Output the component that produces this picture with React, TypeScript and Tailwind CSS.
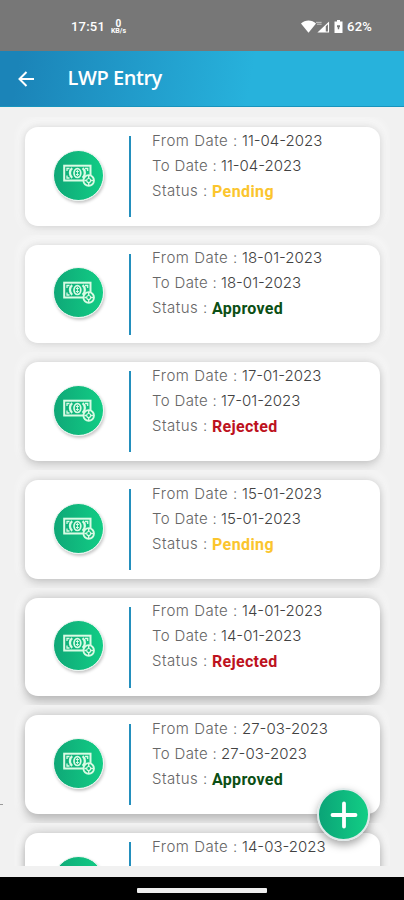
import { clsx } from 'clsx';

type Status = 'Pending' | 'Approved' | 'Rejected';

interface LeaveEntry {
  from: string;
  to: string;
  status: Status;
}

const ENTRIES: LeaveEntry[] = [
  { from: '11-04-2023', to: '11-04-2023', status: 'Pending' },
  { from: '18-01-2023', to: '18-01-2023', status: 'Approved' },
  { from: '17-01-2023', to: '17-01-2023', status: 'Rejected' },
  { from: '15-01-2023', to: '15-01-2023', status: 'Pending' },
  { from: '14-01-2023', to: '14-01-2023', status: 'Rejected' },
  { from: '27-03-2023', to: '27-03-2023', status: 'Approved' },
  { from: '14-03-2023', to: '14-03-2023', status: 'Approved' },
];

const STATUS_STYLES: Record<Status, string> = {
  Pending: 'text-[#fbc52d] tracking-[0.4px]',
  Approved: 'text-[#0b4f14] tracking-[0.3px]',
  Rejected: 'text-[#bd1220] tracking-[0.3px]',
};

// Elevation gets heavier further down the list
const CARD_SHADOWS = [
  'shadow-[0_2px_8px_0_rgba(0,0,0,0.13),0_-2px_9px_0_rgba(0,0,0,0.05),0_-2px_8px_7px_rgba(255,255,255,0.5)]',
  'shadow-[0_4px_9px_0_rgba(0,0,0,0.19),0_-3px_9px_0_rgba(0,0,0,0.09),0_-2px_8px_7px_rgba(255,255,255,0.5)]',
  'shadow-[0_6px_10px_0_rgba(0,0,0,0.24),0_-4px_9px_0_rgba(0,0,0,0.13),0_-2px_8px_7px_rgba(255,255,255,0.5)]',
];

function StatusBar() {
  return (
    <div className="flex h-[51px] shrink-0 items-center justify-between bg-[#777777] pl-[71px] pr-[32px] pt-[2px] font-['Roboto',sans-serif] text-white">
      <div className="flex items-center gap-[6px]">
        <span className="text-[13px] font-medium leading-4 tracking-[0.2px]">17:51</span>
        <span className="flex w-[15px] flex-col items-center font-bold">
          <span className="text-[10px] leading-[9px]">0</span>
          <span className="text-[7px] leading-[7px]">KB/s</span>
        </span>
      </div>
      <div className="flex items-center">
        <svg width="15" height="13" viewBox="0 0 15 13" fill="currentColor">
          <path d="M0 3.6C4 -.4 11 -.4 15 3.6L7.5 12.7Z" />
        </svg>
        <svg width="14" height="14" viewBox="0 0 15 14" fill="none">
          <path d="M1.5 13 14 1v12Z" fill="white" />
          <path d="M10.5 6.3 12.8 4v7.7h-2.3Z" fill="#777777" />
          <path d="M0 2h6M1 4h5" stroke="white" strokeOpacity=".65" />
        </svg>
        <svg width="9" height="13" viewBox="0 0 9 13" fill="none" className="ml-[4px]">
          <path d="M3 0h3v1.5h2.5V13h-8V1.5H3Z" fill="white" />
          <path d="M3 5.2h3v2H5.2v2H3.8v-2H3Z" fill="#777777" />
        </svg>
        <span className="ml-[4px] text-[13px] font-medium leading-4 tracking-[0.2px]">62%</span>
      </div>
    </div>
  );
}

function Header() {
  return (
    <header className="flex h-[56px] shrink-0 items-center border-b border-[#1794bd] bg-[linear-gradient(100deg,#1b84b8_5%,#27b2dc_62%,#27b2dc)] text-white">
      <svg width="17" height="16" viewBox="0 0 17 16" fill="none" stroke="currentColor" strokeWidth="2" className="ml-[18px]">
        <path d="M16 8H2M8.5 1 1.5 8l7 7" />
      </svg>
      <h1 className="ml-[32.5px] pb-[2px] font-['Open_Sans',sans-serif] text-[20px] font-semibold leading-7 tracking-[-0.45px]">
        LWP Entry
      </h1>
    </header>
  );
}

// Banknote with a small coin over its lower right corner
function MoneyIcon() {
  return (
    <svg width="32" height="23" viewBox="0 0 32 23" fill="none" stroke="#d9fbe4" className="ml-[1px]">
      <rect x="1.2" y="1.7" width="26.3" height="14.8" strokeWidth="2" />
      <path d="M6.5 4.5H4v2.5M4 11.5V14h2.5M22 4.5h2.7V7" strokeWidth="1.3" />
      <ellipse cx="14.4" cy="9.1" rx="3.4" ry="4.4" strokeWidth="1.7" />
      <path d="M9.2 4.2c-3 2.3-3 7.3 0 9.6M19.6 4.2c3 2.3 3 7.3 0 9.6" strokeWidth="2.3" />
      <path d="M14.4 6v6M12.9 7.5h3M12.9 10.5h3" strokeWidth="1" />
      <circle cx="25.7" cy="16.5" r="5.3" fill="#12bd7b" strokeWidth="1.8" />
      <path d="M25.7 12v2.5M25.7 18.5V21M21.3 16.5h2.4M27.7 16.5h2.4" strokeWidth="1.5" />
      <circle cx="25.7" cy="16.5" r="2" strokeWidth="1.1" />
    </svg>
  );
}

function EntryCard({ entry, shadow }: { entry: LeaveEntry; shadow: string }) {
  return (
    <li className="h-[117.7px] shrink-0 overflow-hidden px-[10.5px] pt-[10px]">
      <article className={clsx('flex h-[98.5px] rounded-[13px] bg-white', shadow)}>
        <div className="flex w-[104px] justify-center pl-[4px] pt-[22.5px]">
          <div className="flex size-[51px] items-center justify-center rounded-full border border-[#e9f5ef] bg-linear-to-r from-[#0fa877] to-[#12cd85] shadow-[1px_2px_3px_rgba(0,0,0,0.22)]">
            <MoneyIcon />
          </div>
        </div>
        <div className="mt-[9px] h-[81px] w-[2px] bg-[#238fbd]" />
        <div className="ml-[21.5px] pt-[0.5px] font-['Inter',sans-serif] text-[15px] font-light leading-[25px] text-[#666666]">
          <p className="flex">
            <span className="w-[90px] tracking-[0.5px]">From Date :</span>
            <span className="text-[#414141]">{entry.from}</span>
          </p>
          <p className="flex">
            <span className="w-[69px] tracking-[0.35px]">To Date :</span>
            <span className="text-[#414141]">{entry.to}</span>
          </p>
          <p className="flex">
            <span className="w-[60px] tracking-[0.5px]">Status :</span>
            <span className={clsx("pt-[1px] font-['Roboto',sans-serif] text-[16px] font-bold", STATUS_STYLES[entry.status])}>
              {entry.status}
            </span>
          </p>
        </div>
      </article>
    </li>
  );
}

export default function App() {
  return (
    <div className="relative flex h-[900px] w-[404px] flex-col overflow-hidden bg-[#f1f1f1]">
      <StatusBar />
      <Header />
      <main className="mx-[14px] mt-[10px] h-[749px] shrink-0 overflow-hidden">
        <ul className="flex flex-col">
          {ENTRIES.map((entry, i) => (
            <EntryCard key={entry.from} entry={entry} shadow={CARD_SHADOWS[Math.min(2, Math.floor(i / 2))]} />
          ))}
        </ul>
      </main>
      <span className="absolute left-0 top-[804px] h-px w-[3px] bg-[#999999]" />
      <button
        type="button"
        aria-label="Add entry"
        className="absolute left-[317px] top-[788px] flex size-[53px] items-center justify-center rounded-full border-2 border-[#dfe9e9] bg-linear-to-r from-[#0ba477] to-[#12ce85] shadow-[0_4px_8px_rgba(0,0,0,0.35)]"
      >
        <svg width="28" height="28" viewBox="0 0 28 28" stroke="white" strokeWidth="3.8" strokeLinecap="round">
          <path d="M14 2.5v23M2.5 14h23" />
        </svg>
      </button>
      <div className="mt-auto flex h-[23px] items-center justify-center bg-black pt-[4px]">
        <span className="h-[5px] w-[130px] rounded-[1px] bg-[#eeeeee]" />
      </div>
    </div>
  );
}
